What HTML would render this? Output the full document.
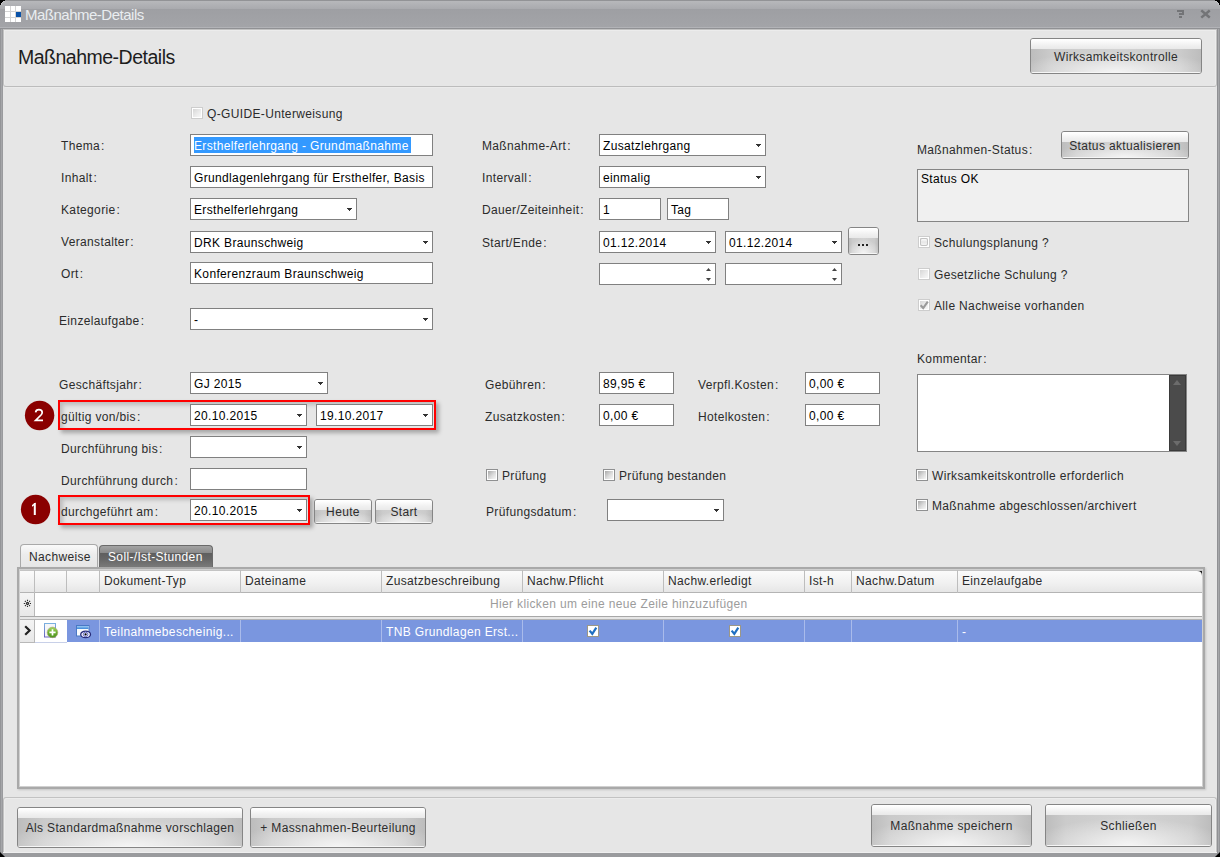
<!DOCTYPE html><html><head><meta charset="utf-8"><style>
*{box-sizing:border-box;margin:0;padding:0}
html,body{width:1220px;height:857px;overflow:hidden;background:#000}
body{position:relative;font-family:"Liberation Sans",sans-serif;font-size:12px;letter-spacing:0.35px;color:#1e1e1e}
.a{position:absolute}
i.c{font-style:normal;padding-left:1px}
.t{position:absolute;white-space:nowrap;line-height:14px;color:#2b2b2b}
.in{position:absolute;background:#fff;border:1px solid #808080}
.in .v{position:absolute;left:3px;top:4px;white-space:nowrap;line-height:14px;color:#000}
.dd{position:absolute;right:4px;top:9px;width:5px;height:1px;background:#333}
.dd:before{content:"";position:absolute;left:1px;top:1px;width:3px;height:1px;background:#333}
.dd:after{content:"";position:absolute;left:2px;top:2px;width:1px;height:1px;background:#333}
.up,.dn{position:absolute;right:4px;width:5px;height:3px}
.up{top:4px;clip-path:polygon(50% 0,100% 100%,0 100%);background:#444}
.dn{top:14px;clip-path:polygon(0 0,100% 0,50% 100%);background:#444}
.btn{position:absolute;border:1px solid #858585;border-radius:3px;overflow:hidden;text-align:center;color:#2d2d2d;background:#d8d8d8}
.btn .bt{position:absolute;left:0;right:0;top:0;background:linear-gradient(#fefefe,#f0f0f0 60%,#e9e9e9);border-top:1px solid #fff}
.btn .bb{position:absolute;left:0;right:0;bottom:0;
background:radial-gradient(ellipse 60% 90% at 50% 100%,rgba(255,255,255,.75),rgba(255,255,255,0) 100%),linear-gradient(90deg,#bdbdbd,#cbcbcb 12%,#d3d3d3 50%,#cbcbcb 88%,#bdbdbd);
border-bottom:1px solid #f6f6f6}
.btn span{position:absolute;left:0;right:0;white-space:nowrap;line-height:14px}
.cb{position:absolute;width:12px;height:12px;border:1px solid #8f9091;background:#fff}
.cb b{position:absolute;left:1px;top:1px;width:8px;height:8px;background:linear-gradient(135deg,#a9a9a9,#dcdcdc 55%,#f7f7f7)}
.cb.dis{border-color:#cdcdcd}
.cb u{position:absolute;left:1px;top:1px;width:8px;height:8px;border:1px solid #c2c2c2;border-radius:2px;background:linear-gradient(#fafafa,#e6e6e6 50%,#f4f4f4)}
.cb.dis b{background:linear-gradient(135deg,#d6d6d6,#ebebeb 55%,#f7f7f7)}
.redbox{position:absolute;border:2px solid #ff0000;box-shadow:3px 3px 4px rgba(0,0,0,.28),inset 3px 3px 4px rgba(0,0,0,.18)}
.badge{position:absolute;width:30px;height:30px;border-radius:50%;background:#800000;color:#fff;font-size:16px;line-height:30px;text-align:center;letter-spacing:0}
</style></head><body>
<div class="a" style="left:0;top:0;width:1220px;height:857px;background:linear-gradient(90deg,#949598 0,#949598 1px,#a5a6a9 1px,#a5a6a9 2px,#9a9b9e 2px,#9a9b9e 1217px,#909194 1217px,#909194 1218px,#a6a7aa 1218px,#a6a7aa 1219px,#949598 1219px)"></div>
<div class="a" style="left:0;top:0;width:1220px;height:29px;background:linear-gradient(#929396 0,#929396 1px,#b7b8bb 1px,#a9aaae 9px,#9e9fa3 9px,#a3a4a8 27px,#b2b3b7 27px,#b2b3b7 28px,#909194 28px)"></div>
<svg class="a" style="left:0;top:0" width="1220" height="6" shape-rendering="crispEdges"><g fill="#000"><rect x="0" y="0" width="5" height="1"/><rect x="0" y="1" width="3" height="1"/><rect x="0" y="2" width="2" height="2"/><rect x="0" y="4" width="1" height="1"/><rect x="1215" y="0" width="5" height="1"/><rect x="1217" y="1" width="3" height="1"/><rect x="1218" y="2" width="2" height="2"/><rect x="1219" y="4" width="1" height="1"/></g><g fill="#c4c5c8"><rect x="3" y="1" width="2" height="1"/><rect x="2" y="2" width="1" height="1"/><rect x="1" y="3" width="1" height="2"/><rect x="1215" y="1" width="2" height="1"/><rect x="1217" y="2" width="1" height="1"/><rect x="1218" y="3" width="1" height="2"/></g></svg>
<div class="a" style="left:5px;top:6px;width:16px;height:16px;background:#fff"></div>
<div class="a" style="left:10px;top:6px;width:1px;height:16px;background:#d4d4d4"></div>
<div class="a" style="left:15px;top:6px;width:1px;height:16px;background:#d4d4d4"></div>
<div class="a" style="left:5px;top:11px;width:16px;height:1px;background:#d4d4d4"></div>
<div class="a" style="left:5px;top:17px;width:16px;height:1px;background:#d4d4d4"></div>
<div class="a" style="left:16px;top:12px;width:5px;height:5px;background:#0a52a8"></div>
<div class="t" style="left:25px;top:6px;font-size:15px;line-height:18px;color:#e9edf0;letter-spacing:-0.5px">Maßnahme-Details</div>
<svg class="a" style="left:1170px;top:6px" width="48" height="16" viewBox="0 0 48 16" shape-rendering="crispEdges"><g fill="#737477"><rect x="7" y="4" width="7" height="2"/><rect x="12" y="6" width="2" height="1"/><rect x="9" y="7" width="5" height="2"/><rect x="9" y="10" width="3" height="2"/></g></svg>
<svg class="a" style="left:1170px;top:6px" width="48" height="16" viewBox="0 0 48 16"><path d="M32.2 5.2L38.8 10.8M38.8 5.2L32.2 10.8" stroke="#737477" stroke-width="2.5" stroke-linecap="square"/></svg>
<div class="a" style="left:3px;top:29px;width:1214px;height:824px;background:#e6e6e6"></div>
<div class="a" style="left:3px;top:29px;width:1214px;height:58px;border:1px solid #c2c2c2;border-bottom-color:#bcbcbc;border-radius:0 0 3px 3px;box-shadow:inset 1px 1px 0 #ececec,inset -1px 0 0 #ececec"></div>
<div class="a" style="left:5px;top:87px;width:1210px;height:1px;background:#ebebeb"></div>
<div class="t" style="left:18px;top:46px;font-size:19.5px;line-height:22px;color:#1d1d1d;letter-spacing:-0.5px">Maßnahme-Details</div>
<div class="btn" style="left:1030px;top:38px;width:172px;height:36px"><div class="bt" style="height:10px"></div><div class="bb" style="top:10px"></div><span style="top:11px">Wirksamkeitskontrolle</span></div>
<div class="cb dis" style="left:191px;top:107px"><b></b></div>
<div class="t" style="left:207px;top:107px;">Q-GUIDE-Unterweisung</div>
<div class="t" style="left:61px;top:139px;">Thema<i class="c">:</i></div>
<div class="t" style="left:61px;top:171px;">Inhalt<i class="c">:</i></div>
<div class="t" style="left:61px;top:203px;">Kategorie<i class="c">:</i></div>
<div class="t" style="left:61px;top:235px;">Veranstalter<i class="c">:</i></div>
<div class="t" style="left:61px;top:267px;">Ort<i class="c">:</i></div>
<div class="in" style="left:190px;top:134px;width:243px;height:22px"><div class="a" style="left:3px;top:2px;width:217px;height:16px;background:#3399ff"></div><div class="v" style="color:#fff">Ersthelferlehrgang - Grundmaßnahme</div></div>
<div class="in" style="left:190px;top:166px;width:243px;height:22px"><div class="v">Grundlagenlehrgang für Ersthelfer, Basis</div></div>
<div class="in" style="left:190px;top:198px;width:167px;height:22px"><div class="v">Ersthelferlehrgang</div><div class="dd"></div></div>
<div class="in" style="left:190px;top:231px;width:243px;height:22px"><div class="v">DRK Braunschweig</div><div class="dd"></div></div>
<div class="in" style="left:190px;top:262px;width:243px;height:22px"><div class="v">Konferenzraum Braunschweig</div></div>
<div class="t" style="left:59px;top:314px;">Einzelaufgabe<i class="c">:</i></div>
<div class="in" style="left:190px;top:308px;width:243px;height:22px"><div class="v">-</div><div class="dd"></div></div>
<div class="t" style="left:59px;top:378px;">Geschäftsjahr<i class="c">:</i></div>
<div class="in" style="left:190px;top:372px;width:138px;height:22px"><div class="v">GJ 2015</div><div class="dd"></div></div>
<div class="redbox" style="left:58px;top:400px;width:378px;height:30px"></div>
<svg class="a" style="left:24px;top:400px" width="32" height="32" viewBox="0 0 32 32"><circle cx="15.6" cy="15.5" r="14.7" fill="#8a0000"/><path d="M11.6 12.4Q11.9 9.7 14.9 9.7Q18.2 9.7 18.2 12.4Q18.2 13.7 17 15L11.6 20.4H19" fill="none" stroke="#fff" stroke-width="1.7" stroke-linejoin="miter"/></svg>
<div class="t" style="left:61px;top:410px;">gültig von/bis<i class="c">:</i></div>
<div class="in" style="left:190px;top:404px;width:117px;height:22px"><div class="v">20.10.2015</div><div class="dd"></div></div>
<div class="in" style="left:316px;top:404px;width:117px;height:22px"><div class="v">19.10.2017</div><div class="dd"></div></div>
<div class="t" style="left:61px;top:442px;">Durchführung bis<i class="c">:</i></div>
<div class="in" style="left:190px;top:436px;width:117px;height:22px"><div class="dd"></div></div>
<div class="t" style="left:61px;top:474px;">Durchführung durch<i class="c">:</i></div>
<div class="in" style="left:190px;top:468px;width:117px;height:22px"></div>
<div class="redbox" style="left:58px;top:495px;width:252px;height:30px"></div>
<svg class="a" style="left:20px;top:494px" width="32" height="32" viewBox="0 0 32 32"><circle cx="15.6" cy="15.5" r="14.7" fill="#8a0000"/><path d="M14.8 9V21" stroke="#fff" stroke-width="2"/><path d="M15.8 8.6L12 11V12.7L14.8 11.1Z" fill="#fff"/></svg>
<div class="t" style="left:61px;top:505px;">durchgeführt am<i class="c">:</i></div>
<div class="in" style="left:190px;top:499px;width:117px;height:22px"><div class="v">20.10.2015</div><div class="dd"></div></div>
<div class="btn" style="left:314px;top:499px;width:58px;height:25px"><div class="bt" style="height:10px"></div><div class="bb" style="top:10px"></div><span style="top:5px">Heute</span></div>
<div class="btn" style="left:375px;top:499px;width:58px;height:25px"><div class="bt" style="height:10px"></div><div class="bb" style="top:10px"></div><span style="top:5px">Start</span></div>
<div class="t" style="left:482px;top:139px;">Maßnahme-Art<i class="c">:</i></div>
<div class="in" style="left:599px;top:134px;width:167px;height:22px"><div class="v">Zusatzlehrgang</div><div class="dd"></div></div>
<div class="t" style="left:482px;top:171px;">Intervall<i class="c">:</i></div>
<div class="in" style="left:599px;top:166px;width:167px;height:22px"><div class="v">einmalig</div><div class="dd"></div></div>
<div class="t" style="left:482px;top:203px;">Dauer/Zeiteinheit<i class="c">:</i></div>
<div class="in" style="left:599px;top:198px;width:62px;height:22px"><div class="v">1</div></div>
<div class="in" style="left:667px;top:198px;width:62px;height:22px"><div class="v">Tag</div></div>
<div class="t" style="left:482px;top:236px;">Start/Ende<i class="c">:</i></div>
<div class="in" style="left:599px;top:231px;width:117px;height:22px"><div class="v">01.12.2014</div><div class="dd"></div></div>
<div class="in" style="left:725px;top:231px;width:117px;height:22px"><div class="v">01.12.2014</div><div class="dd"></div></div>
<div class="btn" style="left:848px;top:227px;width:31px;height:28px"><div class="bt" style="height:10px"></div><div class="bb" style="top:10px"></div><span style="top:6px"></span></div>
<div class="a" style="left:858px;top:244px;width:2px;height:2px;background:#222"></div>
<div class="a" style="left:862px;top:244px;width:2px;height:2px;background:#222"></div>
<div class="a" style="left:866px;top:244px;width:2px;height:2px;background:#222"></div>
<div class="in" style="left:599px;top:263px;width:117px;height:22px"><div class="up"></div><div class="dn"></div></div>
<div class="in" style="left:725px;top:263px;width:117px;height:22px"><div class="up"></div><div class="dn"></div></div>
<div class="t" style="left:485px;top:378px;">Gebühren<i class="c">:</i></div>
<div class="in" style="left:599px;top:372px;width:75px;height:22px"><div class="v">89,95 €</div></div>
<div class="t" style="left:698px;top:378px;">Verpfl.Kosten<i class="c">:</i></div>
<div class="in" style="left:805px;top:372px;width:75px;height:22px"><div class="v">0,00 €</div></div>
<div class="t" style="left:485px;top:410px;">Zusatzkosten<i class="c">:</i></div>
<div class="in" style="left:599px;top:404px;width:75px;height:22px"><div class="v">0,00 €</div></div>
<div class="t" style="left:698px;top:410px;">Hotelkosten<i class="c">:</i></div>
<div class="in" style="left:805px;top:404px;width:75px;height:22px"><div class="v">0,00 €</div></div>
<div class="cb en" style="left:486px;top:469px"><b></b></div>
<div class="t" style="left:502px;top:469px;">Prüfung</div>
<div class="cb en" style="left:603px;top:469px"><b></b></div>
<div class="t" style="left:619px;top:469px;">Prüfung bestanden</div>
<div class="t" style="left:486px;top:505px;">Prüfungsdatum<i class="c">:</i></div>
<div class="in" style="left:607px;top:499px;width:117px;height:22px"><div class="dd"></div></div>
<div class="t" style="left:917px;top:143px;">Maßnahmen-Status<i class="c">:</i></div>
<div class="btn" style="left:1061px;top:131px;width:128px;height:28px"><div class="bt" style="height:10px"></div><div class="bb" style="top:10px"></div><span style="top:7px">Status aktualisieren</span></div>
<div class="a" style="left:917px;top:169px;width:272px;height:53px;background:#f0f0f0;border:1px solid #858585"></div>
<div class="t" style="left:921px;top:172px;color:#000;">Status OK</div>
<div class="cb dis" style="left:918px;top:236px"><b></b><u></u></div>
<div class="t" style="left:934px;top:236px;">Schulungsplanung ?</div>
<div class="cb dis" style="left:918px;top:268px"><b></b></div>
<div class="t" style="left:934px;top:268px;">Gesetzliche Schulung ?</div>
<div class="cb dis" style="left:918px;top:299px"><b></b><svg class="a" style="left:0;top:0" width="10" height="10"><path d="M1.6 5.2L4.2 8L8.8 1.6" fill="none" stroke="#9a9a9a" stroke-width="2.1"/></svg></div>
<div class="t" style="left:934px;top:299px;">Alle Nachweise vorhanden</div>
<div class="t" style="left:917px;top:352px;">Kommentar<i class="c">:</i></div>
<div class="a" style="left:917px;top:374px;width:270px;height:78px;background:#fff;border:1px solid #858585"></div>
<div class="a" style="left:1169px;top:375px;width:17px;height:76px;background:#4b4b4b;border:1px solid #3a3a3a"></div>
<div class="a" style="left:1173px;top:380px;width:0;height:0;border-left:4.5px solid transparent;border-right:4.5px solid transparent;border-bottom:5px solid #6c6c6c"></div>
<div class="a" style="left:1173px;top:441px;width:0;height:0;border-left:4.5px solid transparent;border-right:4.5px solid transparent;border-top:5px solid #6c6c6c"></div>
<div class="cb en" style="left:916px;top:469px"><b></b></div>
<div class="t" style="left:932px;top:469px;">Wirksamkeitskontrolle erforderlich</div>
<div class="cb en" style="left:916px;top:499px"><b></b></div>
<div class="t" style="left:932px;top:499px;">Maßnahme abgeschlossen/archivert</div>
<div class="a" style="left:20px;top:544px;width:78px;height:25px;border:1px solid #a9a9a9;border-bottom:none;border-radius:4px 4px 0 0;background:linear-gradient(#fafafa,#ececec 40%,#e6e6e6)"></div>
<div class="t" style="left:29px;top:550px;">Nachweise</div>
<div class="a" style="left:99px;top:545px;width:114px;height:23px;border:1px solid #6a6a6a;border-bottom:none;border-radius:4px 4px 0 0;background:linear-gradient(#a4a4a4,#8a8a8a 31%,#5e5e5e 31%,#666 60%,#7c7c7c)"></div>
<div class="t" style="left:108px;top:550px;color:#fff;">Soll-/Ist-Stunden</div>
<div class="a" style="left:17px;top:567px;width:1188px;height:222px;border:2px solid #a9a9a9;background:#fff;box-shadow:1px 1px 2px rgba(0,0,0,.15)"></div>
<div class="a" style="left:19px;top:569px;width:1184px;height:218px;border:1px solid #d0d0d0"></div>
<div class="a" style="left:20px;top:570px;width:1182px;height:23px;background:linear-gradient(#fbfbfb,#f0f0f0 60%,#e6e6e6);border-top:1px solid #c4c4c4;border-bottom:1px solid #b4b4b4"></div>
<div class="a" style="left:34px;top:570px;width:1px;height:23px;background:#bdbdbd"></div>
<div class="a" style="left:66px;top:570px;width:1px;height:23px;background:#bdbdbd"></div>
<div class="a" style="left:99px;top:570px;width:1px;height:23px;background:#bdbdbd"></div>
<div class="a" style="left:240px;top:570px;width:1px;height:23px;background:#bdbdbd"></div>
<div class="a" style="left:381px;top:570px;width:1px;height:23px;background:#bdbdbd"></div>
<div class="a" style="left:522px;top:570px;width:1px;height:23px;background:#bdbdbd"></div>
<div class="a" style="left:663px;top:570px;width:1px;height:23px;background:#bdbdbd"></div>
<div class="a" style="left:804px;top:570px;width:1px;height:23px;background:#bdbdbd"></div>
<div class="a" style="left:851px;top:570px;width:1px;height:23px;background:#bdbdbd"></div>
<div class="a" style="left:957px;top:570px;width:1px;height:23px;background:#bdbdbd"></div>
<svg class="a" style="left:1197px;top:571px" width="5" height="5"><path d="M0 0H5V5Q5 0 0 0Z" fill="#222"/></svg>
<div class="t" style="left:104px;top:574px;">Dokument-Typ</div>
<div class="t" style="left:245px;top:574px;">Dateiname</div>
<div class="t" style="left:386px;top:574px;">Zusatzbeschreibung</div>
<div class="t" style="left:527px;top:574px;">Nachw.Pflicht</div>
<div class="t" style="left:668px;top:574px;">Nachw.erledigt</div>
<div class="t" style="left:809px;top:574px;">Ist-h</div>
<div class="t" style="left:856px;top:574px;">Nachw.Datum</div>
<div class="t" style="left:962px;top:574px;">Einzelaufgabe</div>
<div class="a" style="left:20px;top:593px;width:15px;height:23px;background:linear-gradient(#f4f4f4,#e8e8e8);border-right:1px solid #b8b8b8"></div>
<svg class="a" style="left:22px;top:598px" width="12" height="12" viewBox="0 0 12 12"><g stroke="#2a2a2a" stroke-width="1.1" stroke-dasharray="1.2 0.8"><path d="M5.5 1.8V9.2M1.8 5.5H9.2M2.9 2.9L8.1 8.1M8.1 2.9L2.9 8.1"/></g></svg>
<div class="t" style="left:490px;top:597px;color:#9c9c9c;">Hier klicken um eine neue Zeile hinzuzufügen</div>
<div class="a" style="left:20px;top:616px;width:1182px;height:4px;background:#e6e6e6;border-top:1px solid #a8a8a8;border-bottom:1px solid #b4b4b4"></div>
<div class="a" style="left:20px;top:620px;width:15px;height:23px;background:linear-gradient(#f4f4f4,#e8e8e8);border-right:1px solid #b8b8b8;border-bottom:1px solid #b8b8b8"></div>
<svg class="a" style="left:24px;top:625px" width="8" height="11"><path d="M1.2 1.2L5.6 5.5L1.2 9.8" fill="none" stroke="#222" stroke-width="2.2"/></svg>
<div class="a" style="left:35px;top:620px;width:32px;height:23px;background:#fff;border-bottom:1px solid #c8d0e8"></div>
<div class="a" style="left:67px;top:620px;width:1135px;height:22px;background:#7a96df"></div>
<div class="a" style="left:99px;top:620px;width:1px;height:22px;background:#a9bbeb"></div>
<div class="a" style="left:240px;top:620px;width:1px;height:22px;background:#a9bbeb"></div>
<div class="a" style="left:381px;top:620px;width:1px;height:22px;background:#a9bbeb"></div>
<div class="a" style="left:522px;top:620px;width:1px;height:22px;background:#a9bbeb"></div>
<div class="a" style="left:663px;top:620px;width:1px;height:22px;background:#a9bbeb"></div>
<div class="a" style="left:804px;top:620px;width:1px;height:22px;background:#a9bbeb"></div>
<div class="a" style="left:851px;top:620px;width:1px;height:22px;background:#a9bbeb"></div>
<div class="a" style="left:957px;top:620px;width:1px;height:22px;background:#a9bbeb"></div>
<svg class="a" style="left:43px;top:622px" width="18" height="18" viewBox="0 0 18 18"><defs><linearGradient id="gd" x1="0" y1="0" x2="0" y2="1"><stop offset="0" stop-color="#7ab0e0"/><stop offset="1" stop-color="#6a62c0"/></linearGradient><linearGradient id="gg" x1="0" y1="0" x2="0" y2="1"><stop offset="0" stop-color="#a6d860"/><stop offset="0.5" stop-color="#6cb030"/><stop offset="1" stop-color="#4a9220"/></linearGradient></defs><rect x="1.5" y="1.5" width="11" height="13.5" fill="#f4f6f8" stroke="url(#gd)" stroke-width="1"/><circle cx="9.5" cy="10.4" r="5.3" fill="url(#gg)" stroke="#a8a070" stroke-width="0.6"/><path d="M9.5 7.3v6.2M6.4 10.4h6.2" stroke="#fff" stroke-width="1.7"/></svg>
<svg class="a" style="left:75px;top:624px" width="18" height="16" viewBox="0 0 18 16"><defs><linearGradient id="gt" x1="0" y1="0" x2="0" y2="1"><stop offset="0" stop-color="#9ccaf4"/><stop offset="1" stop-color="#3c88d8"/></linearGradient></defs><rect x="1.5" y="1.5" width="12.5" height="10.5" fill="#fafbfd" stroke="#4a78c4" stroke-width="1"/><rect x="2" y="2" width="11.5" height="3" fill="url(#gt)"/><ellipse cx="10.6" cy="10.4" rx="4.9" ry="3.2" fill="#f0f0fa" stroke="#262a78" stroke-width="1.3"/><ellipse cx="10.6" cy="10.4" rx="2.3" ry="2.2" fill="none" stroke="#6a70c8" stroke-width="1"/><circle cx="10.6" cy="10.4" r="1.1" fill="#000"/></svg>
<div class="t" style="left:104px;top:625px;color:#fff;">Teilnahmebescheinig...</div>
<div class="t" style="left:386px;top:625px;color:#fff;">TNB Grundlagen Erst...</div>
<div class="t" style="left:962px;top:625px;color:#fff;">-</div>
<svg class="a" style="left:587px;top:625px" width="12" height="12"><rect x="0.5" y="0.5" width="11" height="11" fill="#fff" stroke="#9c9786"/><path d="M2.6 5.6L5.3 8.8L9.3 2.6" fill="none" stroke="#1f6fc2" stroke-width="2.2"/></svg>
<svg class="a" style="left:729px;top:625px" width="12" height="12"><rect x="0.5" y="0.5" width="11" height="11" fill="#fff" stroke="#9c9786"/><path d="M2.6 5.6L5.3 8.8L9.3 2.6" fill="none" stroke="#1f6fc2" stroke-width="2.2"/></svg>
<div class="a" style="left:3px;top:797px;width:1214px;height:56px;border:1px solid #c2c2c2;border-bottom:none;border-radius:3px 3px 0 0;box-shadow:inset 1px 1px 0 #ececec,inset -1px 0 0 #ececec"></div>
<div class="a" style="left:3px;top:852px;width:1214px;height:1px;background:#efefef"></div>
<div class="btn" style="left:17px;top:807px;width:226px;height:41px"><div class="bt" style="height:10px"></div><div class="bb" style="top:10px"></div><span style="top:13px">Als Standardmaßnahme vorschlagen</span></div>
<div class="btn" style="left:250px;top:807px;width:176px;height:41px"><div class="bt" style="height:10px"></div><div class="bb" style="top:10px"></div><span style="top:13px">+ Massnahmen-Beurteilung</span></div>
<div class="btn" style="left:871px;top:804px;width:161px;height:43px"><div class="bt" style="height:10px"></div><div class="bb" style="top:10px"></div><span style="top:14px">Maßnahme speichern</span></div>
<div class="btn" style="left:1045px;top:804px;width:167px;height:43px"><div class="bt" style="height:10px"></div><div class="bb" style="top:10px"></div><span style="top:14px">Schließen</span></div>
<svg class="a" style="left:0;top:852px" width="5" height="5"><path d="M0 0L0 5L5 5Z" fill="#000"/></svg>
<svg class="a" style="left:1215px;top:852px" width="5" height="5"><path d="M5 0L5 5L0 5Z" fill="#000"/></svg>
</body></html>
